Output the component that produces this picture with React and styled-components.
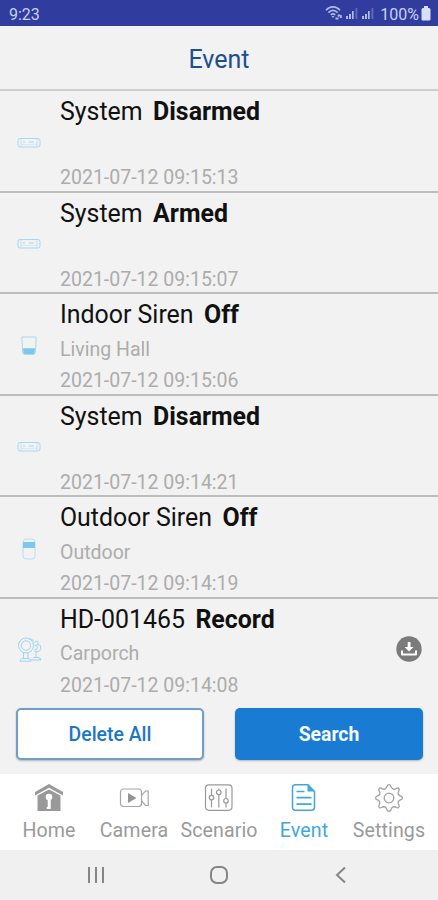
import styled, { createGlobalStyle } from "styled-components";

const GlobalStyle = createGlobalStyle`
  * {
    box-sizing: border-box;
  }

  body {
    margin: 0;
    background-color: #f2f2f2;
    font-family: Roboto, "Liberation Sans", sans-serif;
  }

  svg {
    display: block;
  }
`;

const Screen = styled.div`
  display: flex;
  flex-direction: column;
  width: 438px;
  height: 900px;
  overflow: hidden;
  background-color: #f2f2f2;
`;

const StatusBar = styled.div`
  display: flex;
  flex: none;
  align-items: center;
  justify-content: space-between;
  height: 26px;
  padding: 2px 7px 0 9px;
  background-color: #303d9f;
  color: #c9d0f0;
  font-size: 16px;
`;

const StatusIcons = styled.div`
  display: flex;
  align-items: center;

  svg {
    margin-top: -2px;
  }

  span {
    margin: 0 2px 0 4px;
  }
`;

const Header = styled.header`
  flex: none;
  height: 65px;
  border-bottom: 2px solid #cdcdcd;
  color: #1b4f8f;
  font-size: 25px;
  line-height: 67px;
  text-align: center;
`;

const EventList = styled.div`
  flex: none;
  height: 610px;
`;

const EventRow = styled.div`
  display: grid;
  grid-template-columns: 60px 1fr 58px;
  height: 101.6px;
  border-bottom: ${({ $last }) => ($last ? "none" : "2px solid #bdbdbd")};
`;

const IconCell = styled.div`
  display: flex;
  align-items: center;
  justify-content: center;
  padding-top: ${({ $side }) => ($side === "left" ? "2px" : "0")};
  padding-right: ${({ $side }) => ($side === "left" ? "2px" : "0")};
  padding-bottom: ${({ $side }) => ($side === "right" ? "2px" : "0")};
`;

const EventText = styled.div`
  display: grid;
  grid-template-rows: 34px 28px 28px;
  align-content: start;
  row-gap: 3.5px;
  padding-top: 4px;
  white-space: nowrap;
`;

const EventTitle = styled.div`
  color: #111;
  font-size: 24.9px;
  line-height: 34px;
`;

const EventAction = styled.b`
  margin-left: 10.5px;
`;

const EventDetail = styled.div`
  color: #acacac;
  font-size: 19.5px;
  line-height: 28px;
`;

const Actions = styled.div`
  display: grid;
  flex: none;
  grid-template-columns: 188px 188px;
  column-gap: 31px;
  height: 73px;
  padding: 7px 16px 0;
`;

const ActionButton = styled.button`
  height: 52px;
  padding: 0;
  border: ${({ $primary }) => ($primary ? "none" : "2px solid #6f9fc9")};
  border-radius: 5px;
  background-color: ${({ $primary }) => ($primary ? "#197bd2" : "#fff")};
  box-shadow: 0 1px 2px rgba(0, 0, 0, 0.25);
  color: ${({ $primary }) => ($primary ? "#f4faff" : "#1b76c4")};
  font-family: inherit;
  font-size: 19.4px;
  font-weight: ${({ $primary }) => ($primary ? 700 : 500)};
`;

const TabBar = styled.nav`
  display: grid;
  flex: none;
  grid-template-columns: repeat(5, 85px);
  justify-content: center;
  height: 76px;
  background-color: #fff;
`;

const Tab = styled.div`
  display: flex;
  flex-direction: column;
  align-items: center;
  padding-top: 9px;
  color: ${({ $active }) => ($active ? "#3fa9d8" : "#9a9a9a")};
  font-size: 19.6px;
  line-height: 36px;
  letter-spacing: 0.1px;
  white-space: nowrap;
`;

const SystemNav = styled.div`
  display: grid;
  flex: none;
  grid-template-columns: repeat(3, 122.5px);
  align-items: center;
  justify-items: center;
  height: 50px;
  padding-left: 35px;
  background-color: #f0f0f0;
`;

function WifiIcon() {
  return (
    <svg width="19" height="16" viewBox="0 0 19 16" fill="none" stroke="#aebbe8" strokeWidth="1.6">
      <path d="M1 5.2C5 .8 11 .8 15 5.2M3.4 7.6c2.8-2.8 6.4-2.8 9.2 0M5.7 9.9c1.4-1.3 3.2-1.3 4.6 0" />
      <path d="M6.5 11h3L8 13z" fill="#aebbe8" stroke="none" />
      <path d="M10.5 13.5h3M13 11.5l1.5-2M15.8 10v3" strokeWidth="2" />
    </svg>
  );
}

function SignalIcon() {
  return (
    <svg width="16" height="14" viewBox="0 0 16 14" fill="#aebbe8">
      <path d="M2 10h2v3H2zM5 8h2v5H5zM8 5h1.7v8H8z" />
      <path d="M11.5 2h1.8v11h-1.8z" opacity=".4" />
    </svg>
  );
}

function BatteryIcon() {
  return (
    <svg width="10" height="15" viewBox="0 0 10 15" fill="#d9dff8">
      <path d="M3 0h4v2h1q1.5 0 1.5 1.5v9.7Q9.5 14.5 8 14.5H2Q.5 14.5.5 13.2V3.5Q.5 2 2 2h1z" />
    </svg>
  );
}

function PanelIcon() {
  return (
    <svg width="24" height="12" viewBox="0 0 24 12" fill="none" stroke="#a6d8f3">
      <rect x="1" y="1.5" width="22" height="8.5" rx="2" />
      <path d="M4 2.5v6.5M20 2.5v6.5" strokeWidth=".8" opacity=".8" />
      <path d="M4 7.5h16" strokeWidth=".8" opacity=".4" />
      <path d="M6 5h2M12 5h5" strokeWidth="1.2" />
    </svg>
  );
}

function IndoorSirenIcon() {
  return (
    <svg width="16" height="20" viewBox="0 0 16 20" fill="none" stroke="#a6d8f3">
      <path d="M.8 1h14.4l-.9 15.5q-.2 2-2 2H3.7q-1.8 0-2-2z" />
      <path d="M2 12.3h12l-.4 4.2q-.1 1.5-1.5 1.5H3.900q-1.4 0-1.500-1.500z" fill="#7cc7ed" stroke="none" />
    </svg>
  );
}

function OutdoorSirenIcon() {
  return (
    <svg width="14" height="22" viewBox="0 0 14 22" fill="none" stroke="#b5def4">
      <path d="M1 4q0-3 3-3h6q3 0 3 3v14q0 3-3 3H4q-3 0-3-3z" />
      <path d="M1 4h12v6H1z" fill="#7cc7ed" stroke="none" />
    </svg>
  );
}

function CamerasIcon() {
  return (
    <svg width="27" height="30" viewBox="0 0 27 30" fill="none" stroke="#9dd4f5">
      <circle cx="10" cy="9.500" r="7.500" />
      <circle cx="10" cy="9.500" r="4.700" />
      <path d="M4.500 4.500l-1 2M13 3.200h3l1.500 2.300M7.500 17v5.500M12 17v5.500M4 25.200q0-2.700 3-2.700h5q3 0 3 2.700z" />
      <path d="M18.500 6q2-1.500 3.800 0l-1 2.500 3 .8q1.300 3-.5 5.500-2.500 2-5.500 0M18.500 9q2.800 0 2.800 2.500T18.500 14M20 16v5.500M15 24h10q-.2-2.500-3-2.500h-5" />
    </svg>
  );
}

function DownloadIcon() {
  return (
    <svg width="26" height="26" viewBox="0 0 26 26">
      <circle cx="13" cy="13" r="12.700" fill="#7b7b7b" />
      <path d="M11.700 6h2.800v5h3L13 15.500 8.600 11h3.100z" fill="#fff" />
      <path d="M6 14.500v4h14v-4" fill="none" stroke="#fff" strokeWidth="2" strokeLinejoin="round" />
    </svg>
  );
}

function HomeIcon() {
  return (
    <svg width="30" height="30" viewBox="0 0 30 30" fill="#999">
      <path d="M15 1l14 8v3.5L15 4.800 1 12.500V9z" />
      <path d="M15 6.500l11.500 6V28h-23V12.500z" />
      <circle cx="15" cy="14" r="3.300" fill="#fff" />
      <path d="M13.700 16.500h3V26h-4v-2h1z" fill="#fff" />
    </svg>
  );
}

function CameraIcon() {
  return (
    <svg width="30" height="30" viewBox="0 0 30 30" fill="none" stroke="#a6a6a6" strokeWidth="1.200">
      <rect x="1.500" y="6" width="21" height="17.500" rx="3" />
      <path d="M22.500 12.300l4-4.300h2.700v14.500h-2.700l-4-4.800" />
      <path d="M9 10v10l8.500-5z" fill="#949494" stroke="none" />
    </svg>
  );
}

function ScenarioIcon() {
  return (
    <svg width="30" height="30" viewBox="0 0 30 30" fill="none" stroke="#999" strokeWidth="1.200">
      <rect x="1.500" y="1.800" width="26.500" height="25.500" rx="3.500" />
      <path d="M7.500 5.500v6.800M7.500 17v7.500M14.800 5.500V7M14.800 11.700v12.800M22 5.500v10M22 20.200v4.300" />
      <circle cx="7.500" cy="14.600" r="2.300" />
      <circle cx="14.800" cy="9.300" r="2.300" />
      <circle cx="22" cy="17.800" r="2.300" />
    </svg>
  );
}

function EventIcon() {
  return (
    <svg width="30" height="30" viewBox="0 0 30 30" fill="none" stroke="#3fa9d8" strokeWidth="1.500">
      <path d="M19 1.800H6.500q-3 0-3 3v19.500q0 3 3 3h16q3 0 3-3V8.500z" />
      <path d="M18.500 1.200v7.300h7.300z" fill="#3fa9d8" stroke="none" />
      <path d="M7.500 8.500h8M7.500 14.700h15M7.500 21.200h15" strokeWidth="1.700" />
    </svg>
  );
}

function SettingsIcon() {
  return (
    <svg width="30" height="30" viewBox="0 0 30 30" fill="none" stroke="#a0a0a0" strokeWidth="1.300">
      <path
        d="M15 1.600Q16.400 1.600 16.900 3.200 17.400 5.500 19.300 6.200 21 6.500 22.700 5.200 24 4.600 24.800 5.500 25.700 6.400 25 7.700 23.800 9.300 24.200 11 24.900 12.700 27 13.100 28.400 13.600 28.400 14.900 28.400 16.200 27 16.600 24.900 17.100 24.200 18.900 23.900 20.500 25 22.200 25.600 23.500 24.700 24.400 23.800 25.200 22.500 24.500 20.800 23.400 19.100 23.900 17.500 24.700 17 26.700 16.500 28.300 15 28.300 13.500 28.300 13 26.700 12.500 24.700 10.900 23.900 9.200 23.400 7.500 24.500 6.200 25.200 5.300 24.400 4.400 23.500 5 22.200 6.100 20.500 5.800 18.900 5.100 17.100 3 16.600 1.600 16.200 1.600 14.900 1.600 13.600 3 13.100 5.100 12.700 5.800 11 6.200 9.300 5 7.700 4.300 6.400 5.200 5.500 6 4.600 7.300 5.200 9 6.500 10.700 6.200 12.600 5.500 13.100 3.200 13.600 1.600 15 1.600z"
        strokeLinejoin="round"
      />
      <circle cx="15" cy="15" r="4.800" />
    </svg>
  );
}

const events = [
  { icon: PanelIcon, device: "System", action: "Disarmed", place: "", time: "2021-07-12 09:15:13" },
  { icon: PanelIcon, device: "System", action: "Armed", place: "", time: "2021-07-12 09:15:07" },
  { icon: IndoorSirenIcon, device: "Indoor Siren", action: "Off", place: "Living Hall", time: "2021-07-12 09:15:06" },
  { icon: PanelIcon, device: "System", action: "Disarmed", place: "", time: "2021-07-12 09:14:21" },
  { icon: OutdoorSirenIcon, device: "Outdoor Siren", action: "Off", place: "Outdoor", time: "2021-07-12 09:14:19" },
  { icon: CamerasIcon, device: "HD-001465", action: "Record", place: "Carporch", time: "2021-07-12 09:14:08", download: true },
];

const tabs = [
  { label: "Home", icon: HomeIcon },
  { label: "Camera", icon: CameraIcon },
  { label: "Scenario", icon: ScenarioIcon },
  { label: "Event", icon: EventIcon, active: true },
  { label: "Settings", icon: SettingsIcon },
];

function App() {
  return (
    <>
      <GlobalStyle />
      <Screen>
        <StatusBar>
          <span>9:23</span>
          <StatusIcons>
            <WifiIcon />
            <SignalIcon />
            <SignalIcon />
            <span>100%</span>
            <BatteryIcon />
          </StatusIcons>
        </StatusBar>
        <Header>Event</Header>
        <EventList>
          {events.map(({ icon: Icon, ...event }, index) => (
            <EventRow key={event.time} $last={index === events.length - 1}>
              <IconCell $side="left">
                <Icon />
              </IconCell>
              <EventText>
                <EventTitle>
                  {event.device}
                  <EventAction>{event.action}</EventAction>
                </EventTitle>
                <EventDetail>{event.place}</EventDetail>
                <EventDetail>{event.time}</EventDetail>
              </EventText>
              <IconCell $side="right">{event.download && <DownloadIcon />}</IconCell>
            </EventRow>
          ))}
        </EventList>
        <Actions>
          <ActionButton>Delete All</ActionButton>
          <ActionButton $primary>Search</ActionButton>
        </Actions>
        <TabBar>
          {tabs.map(({ icon: Icon, label, active }) => (
            <Tab key={label} $active={active}>
              <Icon />
              {label}
            </Tab>
          ))}
        </TabBar>
        <SystemNav>
          <svg width="20" height="18" viewBox="0 0 20 18" stroke="#858585" strokeWidth="2">
            <path d="M3 1v16M10 1v16M17 1v16" />
          </svg>
          <svg width="20" height="18" viewBox="0 0 20 18" fill="none" stroke="#858585" strokeWidth="2">
            <rect x="2" y="1" width="16" height="16" rx="6" />
          </svg>
          <svg width="20" height="18" viewBox="0 0 20 18" fill="none" stroke="#858585" strokeWidth="2">
            <path d="M14 1.500L6 9l8 7.500" />
          </svg>
        </SystemNav>
      </Screen>
    </>
  );
}

export default App;
